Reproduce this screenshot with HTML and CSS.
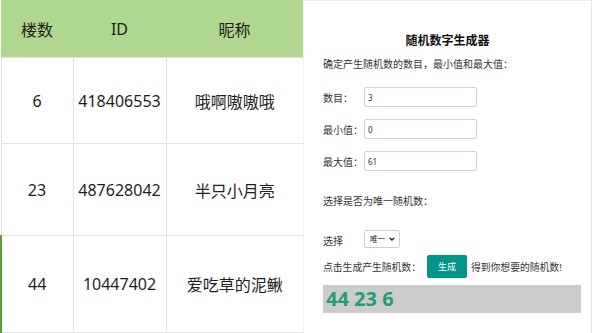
FILE: index.html
```html
<!DOCTYPE html>
<html lang="zh-CN">

<head>
    <meta charset="UTF-8">
    <meta name="viewport" content="width=device-width, initial-scale=1.0">
    <title>随机数字生成器</title>
    <link rel="stylesheet" href="styles.css">
</head>

<body>
    <div class="page">
        <table class="floors">
            <colgroup>
                <col class="c-floor">
                <col class="c-id">
                <col class="c-name">
            </colgroup>
            <thead>
                <tr>
                    <th>楼数</th>
                    <th>ID</th>
                    <th>昵称</th>
                </tr>
            </thead>
            <tbody>
                <tr class="row-a">
                    <td>6</td>
                    <td>418406553</td>
                    <td>哦啊嗷嗷哦</td>
                </tr>
                <tr class="row-b">
                    <td>23</td>
                    <td>487628042</td>
                    <td>半只小月亮</td>
                </tr>
                <tr class="row-c active">
                    <td>44</td>
                    <td>10447402</td>
                    <td>爱吃草的泥鳅</td>
                </tr>
            </tbody>
        </table>

        <section class="generator">
            <h2>随机数字生成器</h2>
            <p class="intro">确定产生随机数的数目，最小值和最大值：</p>

            <div class="field first">
                <label for="count">数目：</label>
                <input type="text" id="count" value="3">
            </div>
            <div class="field">
                <label for="min">最小值：</label>
                <input type="text" id="min" value="0">
            </div>
            <div class="field">
                <label for="max">最大值：</label>
                <input type="text" id="max" value="61">
            </div>

            <p class="ask">选择是否为唯一随机数：</p>

            <div class="field pick">
                <label for="unique">选择</label>
                <div class="select-wrap">
                    <select id="unique">
                        <option>唯一</option>
                        <option>可重复</option>
                    </select>
                    <svg class="chevron" width="6" height="4" viewBox="0 0 6 4">
                        <path d="M0.7 0.7 L3 3 L5.3 0.7" fill="none" stroke="#222" stroke-width="1.3"/>
                    </svg>
                </div>
            </div>

            <div class="go">
                <span>点击生成产生随机数：</span>
                <button type="button">生成</button>
                <span>得到你想要的随机数!</span>
            </div>

            <div class="result">44 23 6</div>
        </section>
    </div>
</body>

</html>
```

FILE: styles.css
```css
body {
    margin: 0;
    padding: 0;
    background-color: #fff;
    color: #222;
    font-family: "Noto Sans", "Noto Sans CJK SC", sans-serif;
}

.page {
    display: flex;
    width: 592px;
    height: 333px;
    overflow: hidden;
}

/* 左侧楼层表 */
.floors {
    width: 302px;
    flex: none;
    border-collapse: collapse;
    table-layout: fixed;
    font-size: 16px;
}

.c-floor {
    width: 72px;
}

.c-id {
    width: 93px;
}

.c-name {
    width: 137px;
}

.floors th {
    height: 57px;
    padding: 0;
    background-color: #b0d78f;
    font-weight: normal;
    color: #1c1c1c;
}

.floors td {
    padding: 0;
    text-align: center;
    border: 1px solid #e3e3e3;
    color: #1e1e1e;
}

.floors td:last-child {
    border-right: none;
}

.row-a td {
    height: 85px;
}

.row-b td {
    height: 91px;
}

.row-c td {
    height: 96px;
}

.active td:first-child {
    border-left: 2px solid #5f9a45;
}

/* 右侧生成器 */
.generator {
    flex: 1;
    box-sizing: border-box;
    padding: 32px 0 0 19px;
    border-top: 1px solid #ececec;
    border-right: 1px solid #e4e4e4;
    border-left: 1px solid #f0f0f0;
    font-size: 10px;
    color: #333;
}

.generator h2 {
    margin: 0 0 0 -19px;
    font-size: 12px;
    line-height: 16px;
    text-align: center;
    color: #111;
}

.intro {
    margin: 8px 0 0;
    line-height: 14px;
}

.field {
    display: flex;
    align-items: center;
    margin-top: 12px;
}

.field.first {
    margin-top: 16px;
}

.field label {
    width: 41px;
}

.field input {
    width: 113px;
    height: 20px;
    box-sizing: border-box;
    padding: 0 3px;
    border: 1px solid #d9d1d1;
    border-radius: 2px;
    font-family: inherit;
    font-size: 8px;
    color: #333;
}

.ask {
    margin: 23px 0 0;
    line-height: 14px;
}

.pick {
    margin-top: 21px;
}

.pick label {
    padding-top: 4px;
}

.select-wrap {
    position: relative;
    display: flex;
}

.select-wrap select {
    appearance: none;
    width: 36px;
    height: 18px;
    padding: 0 0 0 5px;
    border: 1px solid #cfcfcf;
    border-radius: 2px;
    background: #fff;
    font-family: inherit;
    font-size: 7.5px;
    color: #222;
}

.chevron {
    position: absolute;
    top: 7px;
    right: 5px;
    pointer-events: none;
}

.go {
    display: flex;
    align-items: center;
    margin-top: 7px;
    font-size: 9.8px;
}

.go button {
    width: 40px;
    height: 23px;
    margin: 0 4px 0 6px;
    border: none;
    border-radius: 2px;
    background-color: #009688;
    color: #fff;
    font-family: inherit;
    font-size: 9px;
    cursor: pointer;
}

.result {
    width: 258px;
    height: 28px;
    margin-top: 7px;
    box-sizing: border-box;
    padding-left: 3px;
    background-color: #cccccc;
    color: #1f9e70;
    font-size: 20px;
    font-weight: bold;
    line-height: 28px;
}
```
